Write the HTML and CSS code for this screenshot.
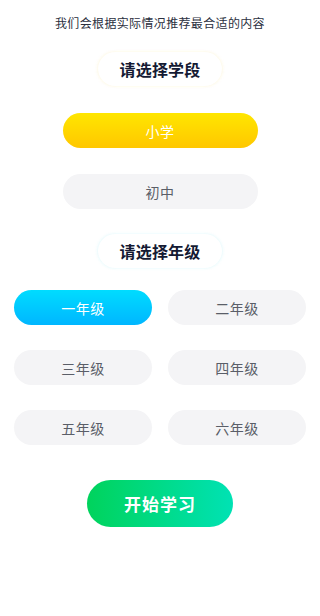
FILE: index.html
```html
<!DOCTYPE html>
<html lang="zh">
<head>
<meta charset="utf-8">
<link rel="stylesheet" href="styles.css">
</head>
<body>
<div class="page">
  <p class="intro">我们会根据实际情况推荐最合适的内容</p>
  <div class="title title-yellow">请选择学段</div>
  <div class="stages">
    <div class="btn btn-yellow stage">小学</div>
    <div class="btn btn-gray stage">初中</div>
  </div>
  <div class="title title-cyan">请选择年级</div>
  <div class="grades">
    <div class="btn btn-cyan">一年级</div>
    <div class="btn btn-gray">二年级</div>
    <div class="btn btn-gray">三年级</div>
    <div class="btn btn-gray">四年级</div>
    <div class="btn btn-gray">五年级</div>
    <div class="btn btn-gray">六年级</div>
  </div>
  <div class="start">开始学习</div>
</div>
</body>
</html>
```
FILE: styles.css
```css
* { box-sizing: border-box; }
html, body { margin: 0; padding: 0; background: #fff; }
body {
  font-family: "Noto Sans CJK SC", "Noto Sans", sans-serif;
  width: 320px;
  height: 616px;
  overflow: hidden;
}
.page {
  display: flex;
  flex-direction: column;
  align-items: center;
}
.intro {
  margin: 14px 0 0;
  font-size: 12px;
  line-height: 18px;
  letter-spacing: 0.35px;
  color: #2b3040;
}
.title {
  margin-top: 20px;
  width: 124px;
  height: 34px;
  border-radius: 17px;
  display: flex;
  align-items: center;
  justify-content: center;
  font-size: 16px;
  font-weight: 700;
  color: #141a33;
  letter-spacing: 0.2px;
}
.title-yellow { box-shadow: -1px 0 3px rgba(250, 232, 160, 0.22), 1px 0 3px rgba(250, 232, 160, 0.22); }
.title-cyan { box-shadow: -1px 0 3px rgba(170, 238, 248, 0.22), 1px 0 3px rgba(170, 238, 248, 0.22); margin-top: 25px; }
.stages {
  margin-top: 27px;
  display: flex;
  flex-direction: column;
  gap: 26px;
}
.btn {
  height: 35px;
  border-radius: 18px;
  display: flex;
  align-items: center;
  justify-content: center;
  font-size: 14px;
  letter-spacing: 0.5px;
}
.stage { width: 195px; }
.btn-yellow {
  background: linear-gradient(180deg, #ffe600 0%, #ffc700 100%);
  color: #fff;
}
.btn-cyan {
  background: linear-gradient(180deg, #00dcff 0%, #00b6ff 100%);
  color: #fff;
}
.btn-gray {
  background: #f4f4f6;
  color: #5a5e68;
}
.grades {
  margin-top: 22px;
  display: grid;
  grid-template-columns: 138px 138px;
  column-gap: 16px;
  row-gap: 25px;
}
.start {
  margin-top: 35px;
  width: 146px;
  height: 47px;
  border-radius: 24px;
  background: linear-gradient(90deg, #00d35c 0%, #00e2b4 100%);
  color: #fff;
  font-size: 17px;
  font-weight: 700;
  letter-spacing: 1px;
  display: flex;
  align-items: center;
  justify-content: center;
}
```
